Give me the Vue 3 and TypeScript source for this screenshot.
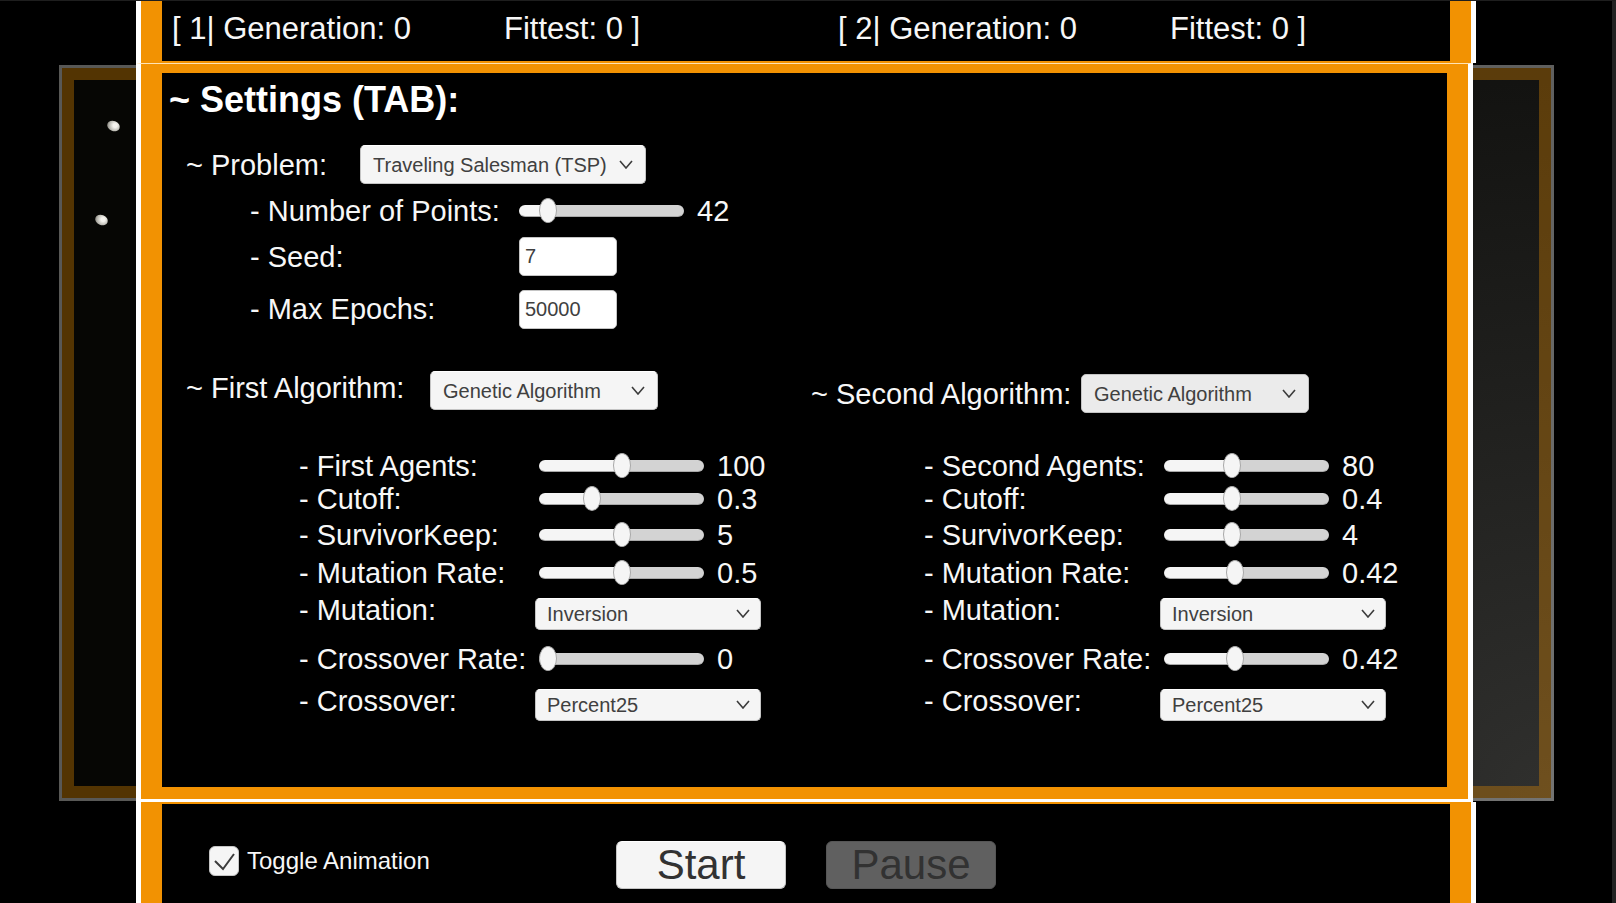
<script setup lang="ts">
import { reactive, ref } from 'vue'

interface SliderRow {
  kind: 'slider'
  id: string
  label: string
  value: number
  min: number
  max: number
  step: number
}
interface SelectRow {
  kind: 'select'
  id: string
  label: string
  value: string
  options: string[]
}
type Row = SliderRow | SelectRow

interface Algorithm {
  id: string
  label: string
  selected: string
  rows: Row[]
}

const slider = (id: string, label: string, value: number, max: number, step: number): SliderRow => ({
  kind: 'slider', id, label, value, min: 0, max, step,
})
const select = (id: string, label: string, value: string, options: string[]): SelectRow => ({
  kind: 'select', id, label, value, options,
})

const algorithmNames = ['Genetic Algorithm', 'Random Search']
const mutations = ['Inversion', 'Swap']
const crossovers = ['Percent25', 'Percent50']

const points = ref(42)
const pointsMin = 10
const pointsMax = 240
const problem = ref('Traveling Salesman (TSP)')
const seed = ref('7')
const maxEpochs = ref('50000')
const animate = ref(true)
const running = ref(false)

const stats = [
  { id: 1, generation: 0, fittest: 0 },
  { id: 2, generation: 0, fittest: 0 },
]

const algorithms = reactive<Algorithm[]>([
  {
    id: 'first',
    label: '~ First Algorithm:',
    selected: 'Genetic Algorithm',
    rows: [
      slider('first-agents', '- First Agents:', 100, 200, 1),
      slider('first-cutoff', '- Cutoff:', 0.3, 1, 0.01),
      slider('first-keep', '- SurvivorKeep:', 5, 10, 1),
      slider('first-mutation-rate', '- Mutation Rate:', 0.5, 1, 0.01),
      select('first-mutation', '- Mutation:', 'Inversion', mutations),
      slider('first-crossover-rate', '- Crossover Rate:', 0, 1, 0.01),
      select('first-crossover', '- Crossover:', 'Percent25', crossovers),
    ],
  },
  {
    id: 'second',
    label: '~ Second Algorithm:',
    selected: 'Genetic Algorithm',
    rows: [
      slider('second-agents', '- Second Agents:', 80, 200, 1),
      slider('second-cutoff', '- Cutoff:', 0.4, 1, 0.01),
      slider('second-keep', '- SurvivorKeep:', 4, 10, 1),
      slider('second-mutation-rate', '- Mutation Rate:', 0.42, 1, 0.01),
      select('second-mutation', '- Mutation:', 'Inversion', mutations),
      slider('second-crossover-rate', '- Crossover Rate:', 0.42, 1, 0.01),
      select('second-crossover', '- Crossover:', 'Percent25', crossovers),
    ],
  },
])

const fill = (value: number, min: number, max: number) => ({
  '--fill': `${((value - min) / (max - min)) * 100}%`,
})
</script>

<template>
  <div class="app">
    <div class="viewport" aria-hidden="true">
      <div class="viewport-inner"></div>
      <i class="agent agent-a"></i>
      <i class="agent agent-b"></i>
    </div>
    <i class="edge" aria-hidden="true"></i>

    <header class="panel top">
      <div class="stats">
        <p v-for="s in stats" :key="s.id" class="stat">
          <span class="generation">[ {{ s.id }}| Generation: {{ s.generation }}</span>
          <span>Fittest: {{ s.fittest }} ]</span>
        </p>
      </div>
    </header>

    <main class="panel middle">
      <div class="settings">
        <h1>~ Settings (TAB):</h1>

        <div class="problem">
          <label for="problem">~ Problem:</label>
          <div class="select wide">
            <select id="problem" v-model="problem">
              <option>Traveling Salesman (TSP)</option>
            </select>
            <svg viewBox="0 0 14 9" width="14" height="9"><path d="M1 1l6 7 6-7" /></svg>
          </div>
        </div>

        <div class="problem-grid">
          <label for="points">- Number of Points:</label>
          <div class="range">
            <input id="points" v-model.number="points" type="range" :min="pointsMin" :max="pointsMax"
              :style="fill(points, pointsMin, pointsMax)" />
            <output for="points">{{ points }}</output>
          </div>
          <label for="seed">- Seed:</label>
          <input id="seed" v-model="seed" class="text" type="text" />
          <label for="epochs">- Max Epochs:</label>
          <input id="epochs" v-model="maxEpochs" class="text" type="text" />
        </div>

        <div class="algorithms">
          <section v-for="a in algorithms" :key="a.id" :class="a.id">
            <div class="algorithm-head">
              <label :for="a.id">{{ a.label }}</label>
              <div class="select medium">
                <select :id="a.id" v-model="a.selected">
                  <option v-for="n in algorithmNames" :key="n">{{ n }}</option>
                </select>
                <svg viewBox="0 0 14 9" width="14" height="9"><path d="M1 1l6 7 6-7" /></svg>
              </div>
            </div>
            <div class="rows">
              <div v-for="r in a.rows" :key="r.id" class="row" :class="r.kind + '-row'">
                <label :for="r.id">{{ r.label }}</label>
                <div v-if="r.kind === 'slider'" class="range">
                  <input :id="r.id" v-model.number="r.value" type="range" :min="r.min" :max="r.max" :step="r.step"
                    :style="fill(r.value, r.min, r.max)" />
                  <output :for="r.id">{{ r.value }}</output>
                </div>
                <div v-else class="select small">
                  <select :id="r.id" v-model="r.value">
                    <option v-for="o in r.options" :key="o">{{ o }}</option>
                  </select>
                  <svg viewBox="0 0 14 9" width="14" height="9"><path d="M1 1l6 7 6-7" /></svg>
                </div>
              </div>
            </div>
          </section>
        </div>
      </div>
    </main>

    <footer class="panel bottom">
      <div class="actions">
        <label class="toggle">
          <span class="box">
            <input v-model="animate" type="checkbox" />
            <svg v-if="animate" viewBox="0 0 30 30" width="30" height="30"><path d="M6 15l8 8 11-15" /></svg>
          </span>
          Toggle Animation
        </label>
        <button type="button" @click="running = true">Start</button>
        <button type="button" :disabled="!running" @click="running = false">Pause</button>
      </div>
    </footer>
  </div>
</template>

<style>
body {
  margin: 0;
  background: #000;
}
</style>

<style scoped>
* {
  box-sizing: border-box;
}

.app {
  position: relative;
  display: flex;
  flex-direction: column;
  min-height: 100vh;
  min-width: 1400px;
  padding: 0 140px 0 136px;
  border-top: 1px solid #1e1e1e;
  overflow: hidden;
  background: #000;
  color: #f7f7f7;
  font: 29px/32px "Liberation Sans", Arial, sans-serif;
}

.viewport {
  position: absolute;
  top: 64px;
  bottom: 102px;
  left: 59px;
  right: 62px;
  border: 3px solid rgba(255, 255, 255, 0.33);
  background: radial-gradient(circle at 100% 100%, #30302e 0, #131311 720px, #060604 1350px) border-box;
}

.viewport-inner {
  height: 100%;
  border: 12px solid rgba(240, 146, 0, 0.33);
}

.agent {
  position: absolute;
  width: 13px;
  height: 10px;
  border-radius: 50%;
  background: radial-gradient(circle at 60% 40%, #f4f3ee 20%, #b5b4ad 60%, #55544f 100%);
  transform: rotate(20deg);
}

.agent-a {
  top: 53px;
  left: 45px;
}

.agent-b {
  top: 147px;
  left: 33px;
}

.edge {
  position: absolute;
  top: 0;
  bottom: 0;
  right: 0;
  width: 4px;
  background: #222;
}

.panel {
  position: relative;
  border: 0 solid #fff;
  border-width: 0 5px;
}

.stats,
.settings,
.actions {
  border: 0 solid #f29202;
  border-width: 0 21px;
  background: #000;
}

.stats {
  display: grid;
  grid-template-columns: 666px 1fr;
  height: 62px;
  padding: 12px 0 0 10px;
  border-bottom-width: 2px;
  font-size: 31px;
  white-space: nowrap;
}

.stat {
  display: flex;
  margin: 0;
}

.generation {
  width: 332px;
}

.middle {
  margin-right: 3px;
  border-width: 1px 5px 3px;
  border-top-color: #ffe3b5;
}

.settings {
  padding: 7px 11px 59px 24px;
  border-width: 9px 21px 12px;
}

h1 {
  margin: 0 0 25px -17px;
  font-size: 36px;
  line-height: 40px;
  color: #fff;
}

label {
  white-space: nowrap;
}

.problem {
  display: flex;
  align-items: center;
}

.problem > label {
  width: 174px;
}

.problem-grid {
  display: grid;
  grid-template-columns: 269px 1fr;
  grid-template-rows: 53px 39px 66px;
  align-items: center;
  padding-left: 64px;
}

.select {
  position: relative;
}

.select select {
  display: block;
  width: 100%;
  height: 39px;
  padding: 0 12px;
  border: 1px solid #c4c4c4;
  border-top-color: #fff;
  border-radius: 5px;
  appearance: none;
  background: #f5f5f5;
  color: #404040;
  font: 20px "Liberation Sans", Arial, sans-serif;
}

.select svg {
  position: absolute;
  top: 50%;
  right: 13px;
  margin-top: -5px;
  pointer-events: none;
}

.select path,
.box path {
  fill: none;
  stroke: #3c3c3c;
  stroke-width: 1.6;
}

.box path {
  stroke-width: 2;
}

.wide {
  width: 286px;
}

.medium {
  width: 228px;
}

.small {
  width: 226px;
}

.small select {
  height: 32px;
  padding: 0 11px;
}

.small svg {
  right: 11px;
}

.second .medium select {
  border-color: #c4c4c4;
  background: #ebebeb;
}

.text {
  width: 98px;
  height: 39px;
  padding: 0 5px;
  border: 1px solid #c4c4c4;
  border-radius: 5px;
  background: #fff;
  color: #404040;
  font: 20px "Liberation Sans", Arial, sans-serif;
}

.range {
  display: flex;
  align-items: center;
  gap: 13px;
}

.range input {
  width: 165px;
  height: 26px;
  margin: 0;
  appearance: none;
  background: transparent;
}

.range input::-webkit-slider-runnable-track {
  height: 12px;
  border-radius: 6px;
  border-bottom: 1px solid #a8a8a8;
  background: linear-gradient(to right, #f5f5f5 var(--fill), #d3d3d3 var(--fill));
}

.range input::-webkit-slider-thumb {
  width: 18px;
  height: 25px;
  margin-top: -7px;
  border: 1px solid #a8a8a8;
  border-radius: 50%;
  appearance: none;
  background: #f5f5f5;
}

.algorithms {
  display: grid;
  grid-template-columns: 1fr 1fr;
  padding-top: 29px;
}

.algorithm-head {
  display: flex;
  align-items: center;
  height: 39px;
  margin-bottom: 40px;
}

.first .algorithm-head label {
  width: 244px;
  padding-bottom: 6px;
}

.second .algorithm-head {
  margin-top: 3px;
  margin-bottom: 37px;
}

.second .algorithm-head label {
  width: 270px;
}

.rows {
  display: grid;
  grid-template-rows: 32px 34px 38px 38px 44px 46px 46px;
  padding-left: 113px;
}

.row {
  display: flex;
  align-items: center;
}

.row label {
  width: 236px;
}

.row .range {
  padding-left: 4px;
}

.select-row label {
  padding-bottom: 8px;
}

.bottom {
  display: flex;
  flex: 1;
}

.actions {
  display: flex;
  flex: 1;
  align-items: flex-start;
  gap: 40px;
  padding: 37px 0 13px 47px;
  border-top-width: 2px;
}

.toggle {
  display: flex;
  align-items: center;
  gap: 8px;
  width: 367px;
  height: 40px;
  font-size: 24px;
}

.box {
  position: relative;
  width: 30px;
  height: 30px;
}

.box input {
  display: block;
  width: 30px;
  height: 30px;
  margin: 0;
  border: 1px solid #c4c4c4;
  border-radius: 6px;
  appearance: none;
  background: #f5f5f5;
}

.box svg {
  position: absolute;
  inset: 0;
  pointer-events: none;
}

.actions button {
  width: 170px;
  height: 48px;
  padding: 0;
  border: 1px solid #c4c4c4;
  border-top-color: #fff;
  border-radius: 6px;
  background: #f5f5f5;
  color: #323232;
  font: 42px/46px "Liberation Sans", Arial, sans-serif;
}

.actions button:disabled {
  border-color: #565656;
  background: #606060;
  color: #323232;
}
</style>
